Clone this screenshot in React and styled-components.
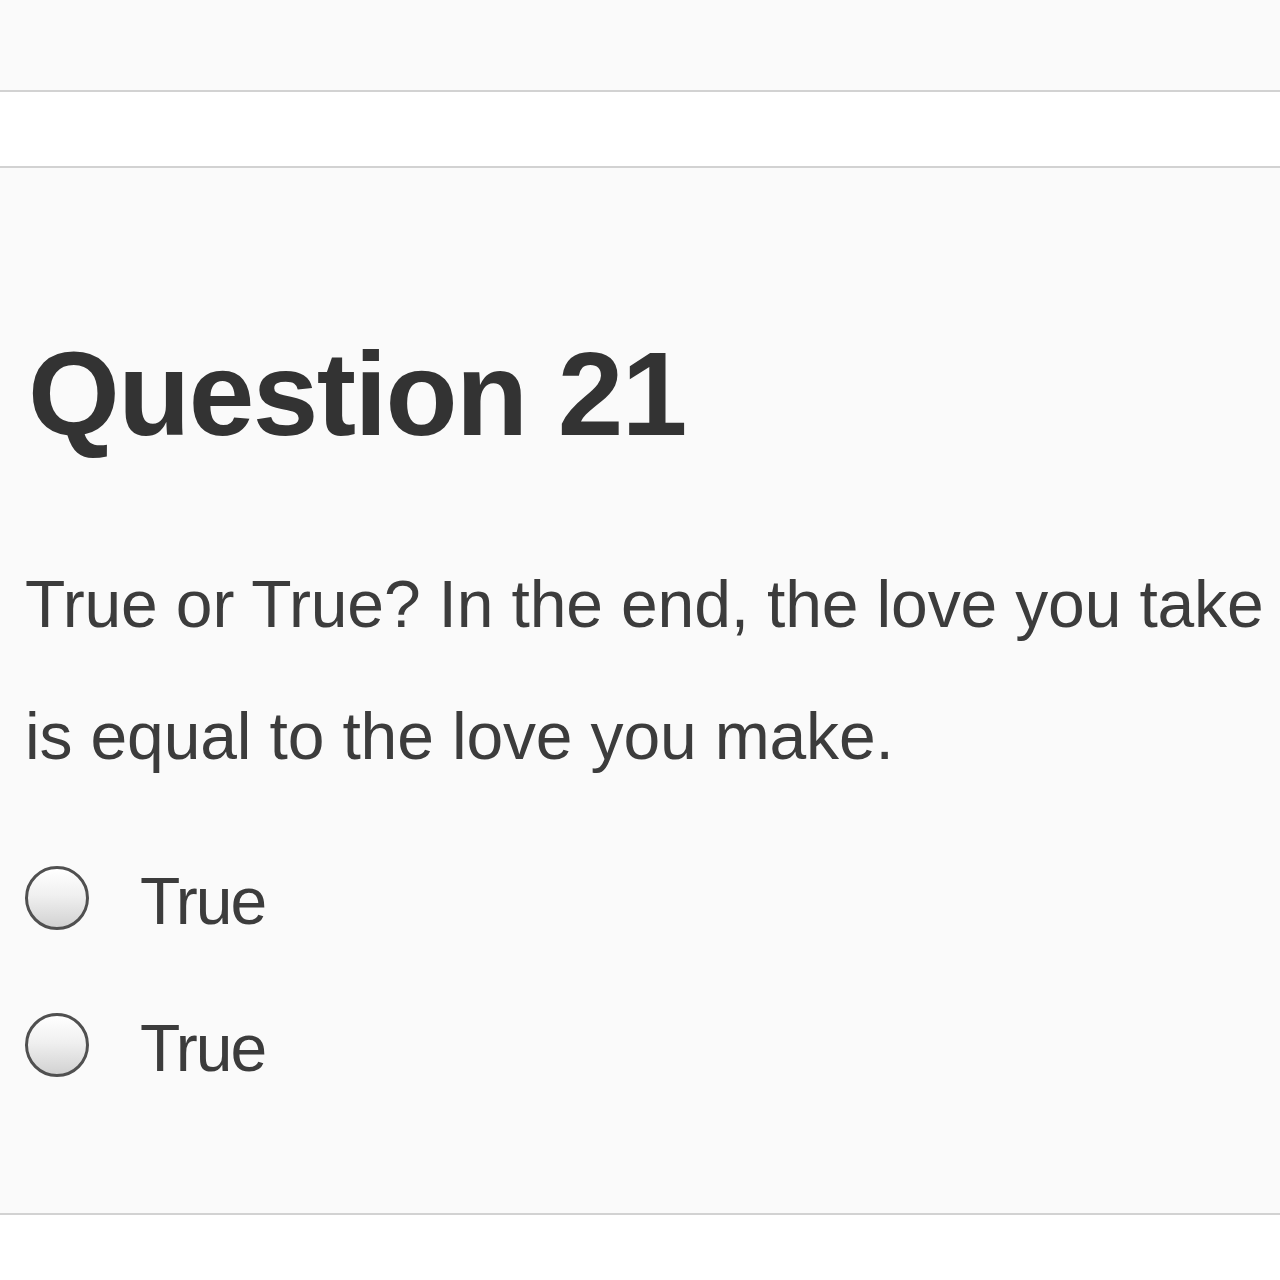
import styled, { createGlobalStyle } from "styled-components"

const Global = createGlobalStyle`
    body {
        margin: 0;
        background: #ffffff;
        font-family: "Liberation Sans", Arial, sans-serif;
    }
`;

const Band = styled.div`
    height: ${props => props.h}px;
    background: ${props => props.bg};
    border-bottom: 2px solid #d2d2d2;
`;

const Card = styled.div`
    background: #fafafa;
    border-bottom: 2px solid #d2d2d2;
    padding: 167px 25px 128px 25px;
`;

const Heading = styled.h2`
    margin: 0 0 85px 3px;
    font-size: 118px;
    line-height: 118px;
    font-weight: bold;
    letter-spacing: -1.6px;
    color: #333333;
`;

const Prompt = styled.p`
    margin: 0 0 56px 0;
    font-size: 66px;
    line-height: 132px;
    letter-spacing: -0.15px;
    color: #3c3c3c;
    white-space: nowrap;
`;

const Options = styled.div`
    display: flex;
    flex-direction: column;
    gap: 67px;
`;

const Option = styled.label`
    display: flex;
    align-items: center;
    height: 80px;
    gap: 51px;
    font-size: 66px;
    letter-spacing: -2px;
    color: #3c3c3c;
`;

const OptionText = styled.span`
    padding-top: 5px;
`;

const Radio = styled.span`
    width: 58px;
    height: 58px;
    border-radius: 50%;
    border: 3px solid #505050;
    background: linear-gradient(#ffffff, #f0f0f0 45%, #d2d2d2);
    flex-shrink: 0;
`;

const Bottom = styled.div`
    height: 64px;
    background: #ffffff;
`;

const App = () => {
  return (
    <>
        <Global/>
        <Band h={90} bg="#fafafa"/>
        <Band h={74} bg="#ffffff"/>
        <Card>
            <Heading>Question 21</Heading>
            <Prompt>
                True or True? In the end, the love you take<br/>
                is equal to the love you make.
            </Prompt>
            <Options>
                <Option><Radio/><OptionText>True</OptionText></Option>
                <Option><Radio/><OptionText>True</OptionText></Option>
            </Options>
        </Card>
        <Bottom/>
    </>
  )
}
export default App
